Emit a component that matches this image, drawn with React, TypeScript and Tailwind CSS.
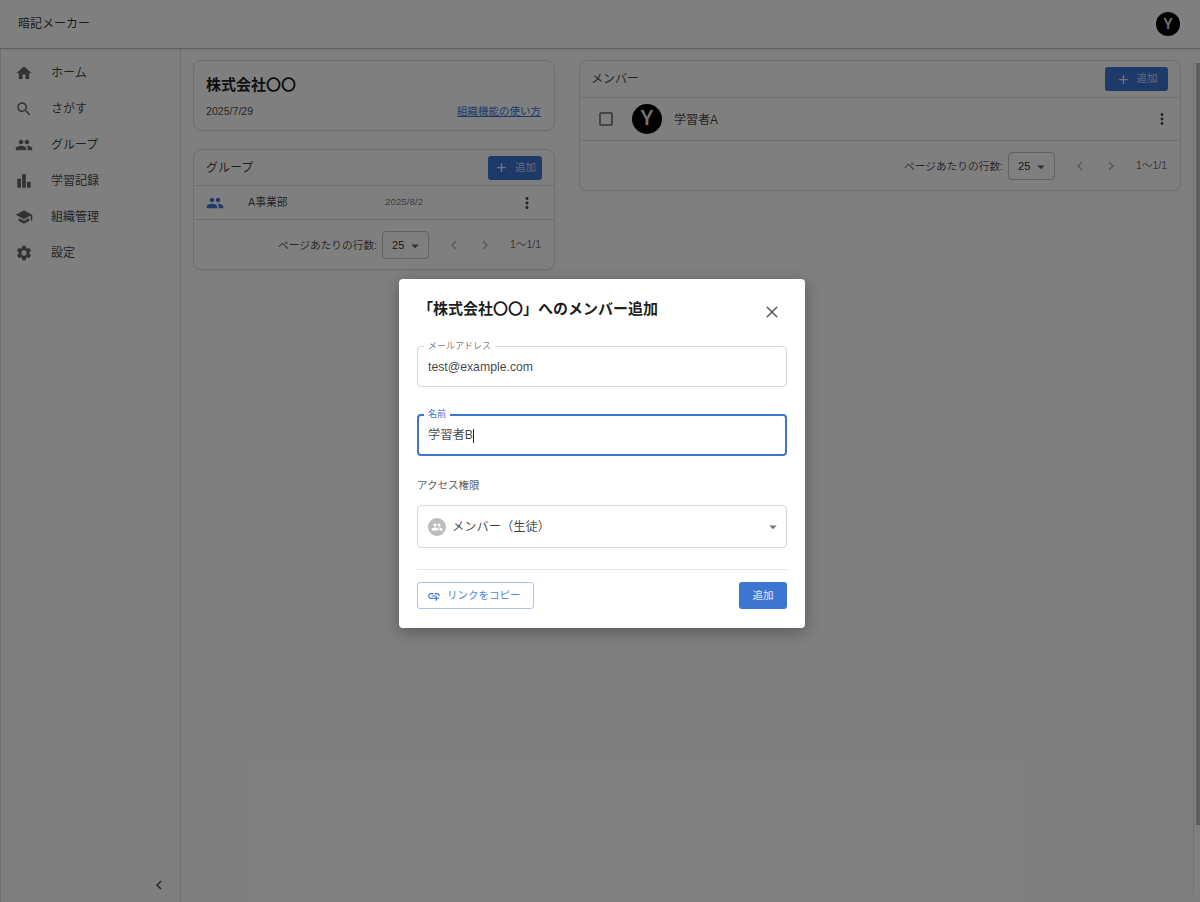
const P = {
  home: "M10 20v-6h4v6h5v-8h3L12 3 2 12h3v8z",
  search: "M15.5 14h-.79l-.28-.27C15.41 12.59 16 11.11 16 9.5 16 5.91 13.09 3 9.5 3S3 5.91 3 9.5 5.91 16 9.5 16c1.61 0 3.09-.59 4.23-1.57l.27.28v.79l5 4.99L20.49 19l-4.99-5zm-6 0C7.01 14 5 11.99 5 9.5S7.01 5 9.5 5 14 7.01 14 9.5 11.99 14 9.5 14z",
  people: "M16 11c1.66 0 2.99-1.34 2.99-3S17.66 5 16 5c-1.66 0-3 1.34-3 3s1.34 3 3 3zm-8 0c1.66 0 2.99-1.34 2.99-3S9.66 5 8 5C6.34 5 5 6.34 5 8s1.34 3 3 3zm0 2c-2.33 0-7 1.17-7 3.5V19h14v-2.5c0-2.33-4.67-3.5-7-3.5zm8 0c-.29 0-.62.02-.97.05 1.16.84 1.97 1.97 1.97 3.45V19h6v-2.5c0-2.33-4.67-3.5-7-3.5z",
  bar: "M3 9h5v12H3zm13 4h5v8h-5zM9.5 3h5v18h-5z",
  school: "M5 13.18v4L12 21l7-3.82v-4L12 17l-7-3.82zM12 3 1 9l11 6 9-4.91V17h2V9L12 3z",
  settings: "M19.14 12.94c.04-.3.06-.61.06-.94 0-.32-.02-.64-.07-.94l2.03-1.58c.18-.14.23-.41.12-.61l-1.92-3.32c-.12-.22-.37-.29-.59-.22l-2.39.96c-.5-.38-1.03-.7-1.62-.94l-.36-2.54c-.04-.24-.24-.41-.48-.41h-3.84c-.24 0-.43.17-.47.41l-.36 2.54c-.59.24-1.13.57-1.62.94l-2.39-.96c-.22-.08-.47 0-.59.22L2.74 8.87c-.12.21-.08.47.12.61l2.03 1.58c-.05.3-.09.63-.09.94s.02.64.07.94l-2.03 1.58c-.18.14-.23.41-.12.61l1.92 3.32c.12.22.37.29.59.22l2.39-.96c.5.38 1.03.7 1.62.94l.36 2.54c.05.24.24.41.48.41h3.84c.24 0 .44-.17.47-.41l.36-2.54c.59-.24 1.13-.56 1.62-.94l2.39.96c.22.08.47 0 .59-.22l1.92-3.32c.12-.22.07-.47-.12-.61l-2.01-1.58zM12 15.6c-1.98 0-3.6-1.62-3.6-3.6s1.62-3.6 3.6-3.6 3.6 1.62 3.6 3.6-1.62 3.6-3.6 3.6z",
  more: "M12 8c1.1 0 2-.9 2-2s-.9-2-2-2-2 .9-2 2 .9 2 2 2zm0 2c-1.1 0-2 .9-2 2s.9 2 2 2 2-.9 2-2-.9-2-2-2zm0 6c-1.1 0-2 .9-2 2s.9 2 2 2 2-.9 2-2-.9-2-2-2z",
  drop: "M7 10l5 5 5-5z",
  close: "M19 6.41 17.59 5 12 10.59 6.41 5 5 6.41 10.59 12 5 17.59 6.41 19 12 13.41 17.59 19 19 17.59 13.41 12z",
  addlink: "M8 11h8v2H8zm12.1 1H22c0-2.76-2.24-5-5-5h-4v1.9h4c1.71 0 3.1 1.39 3.1 3.1zM3.9 12c0-1.71 1.39-3.1 3.1-3.1h4V7H7c-2.76 0-5 2.24-5 5s2.24 5 5 5h4v-1.9H7c-1.71 0-3.1-1.39-3.1-3.1zM17 12h-2v3h-3v2h3v3h2v-3h3v-2h-3z",
  add: "M19 13h-6v6h-2v-6H5v-2h6V5h2v6h6v2z",
  prev: "M15.41 7.41 14 6l-6 6 6 6 1.41-1.41L10.83 12z",
  next: "M10 6 8.59 7.41 13.17 12l-4.58 4.58L10 18l6-6z",
  box: "M19 5v14H5V5h14m0-2H5c-1.1 0-2 .9-2 2v14c0 1.1.9 2 2 2h14c1.1 0 2-.9 2-2V5c0-1.1-.9-2-2-2z",
};

function Icon({ d, className }: { d: string; className: string }) {
  return (
    <svg viewBox="0 0 24 24" fill="currentColor" className={className}>
      <path d={d} />
    </svg>
  );
}

const nav = [
  { icon: P.home, label: "ホーム" },
  { icon: P.search, label: "さがす" },
  { icon: P.people, label: "グループ" },
  { icon: P.bar, label: "学習記録" },
  { icon: P.school, label: "組織管理" },
  { icon: P.settings, label: "設定" },
];

function AddButton({ className }: { className: string }) {
  return (
    <button className={`flex h-6 items-center justify-center gap-[6px] rounded-[3px] bg-[#3d75d3] text-[10.5px] text-white/70 ${className}`}>
      <Icon d={P.add} className="h-[15px] w-[15px] text-white/85" />
      追加
    </button>
  );
}

function Pagination({ h }: { h: string }) {
  return (
    <div className={`flex items-center justify-end pr-[13px] pt-[1px] ${h}`}>
      <span className="text-[10.7px] text-black/70">ページあたりの行数:</span>
      <div className="ml-[5px] flex h-7 w-[47px] items-center justify-between rounded-[4px] border border-[#c4c4c4] pl-[9px] pr-[4px] pt-[1px] text-[11px] text-black/85">
        25
        <Icon d={P.drop} className="h-[18px] w-[18px] text-black/60" />
      </div>
      <Icon d={P.prev} className="ml-4 h-[18px] w-[18px] text-black/30" />
      <Icon d={P.next} className="ml-[13px] h-[18px] w-[18px] text-black/30" />
      <span className="ml-4 text-[10.5px] text-black/60">1〜1/1</span>
    </div>
  );
}

function Avatar({ className }: { className: string }) {
  return (
    <div className={`flex shrink-0 items-center justify-center rounded-full bg-black font-medium text-white/90 [font-family:Roboto,sans-serif] ${className}`}>
      Y
    </div>
  );
}

export default function App() {
  return (
    <div className="relative flex h-[902px] w-[1200px] flex-col overflow-hidden bg-white text-black/85 [font-family:'Liberation_Sans','Noto_Sans_CJK_JP',sans-serif]">
      <header className="flex h-[49px] shrink-0 items-center justify-between border-b border-[#c0c0c0] bg-white pl-[18px] pr-5 shadow-[0_1px_2px_rgba(0,0,0,0.1)]">
        <span className="text-xs text-black/80">暗記メーカー</span>
        <Avatar className="h-6 w-6 text-[15px]" />
      </header>

      <div className="flex min-h-0 flex-1">
        <aside className="flex w-[181px] shrink-0 flex-col justify-between border-x border-[#e0e0e0] border-l-[#dcdcdc] pb-2 pt-[6px]">
          <nav className="flex flex-col">
            {nav.map((n) => (
              <div key={n.label} className="flex h-9 items-center pl-[14px]">
                <Icon d={n.icon} className="h-[18px] w-[18px] text-black/60" />
                <span className="ml-[18px] text-xs text-black/75">{n.label}</span>
              </div>
            ))}
          </nav>
          <div className="flex justify-end pr-[12px]">
            <Icon d={P.prev} className="h-[18px] w-[18px] text-black/70" />
          </div>
        </aside>

        <main className="flex flex-1 items-start gap-6 pl-3 pr-[19px] pt-[11px]">
          <div className="flex w-[362px] shrink-0 flex-col gap-[18px]">
            <section className="h-[71px] rounded-lg border border-[#e0e0e0] px-3 pt-[14px] shadow-[0_1px_1px_rgba(0,0,0,0.06)]">
              <h2 className="text-[15px] font-bold leading-[20px] text-black/90">株式会社〇〇</h2>
              <div className="mt-[9px] flex items-center justify-between pr-[1px]">
                <span className="text-[10.6px] text-black/75">2025/7/29</span>
                <a className="text-[10.5px] text-[#3d75d3] underline">組織機能の使い方</a>
              </div>
            </section>

            <section className="rounded-lg border border-[#e0e0e0] shadow-[0_1px_1px_rgba(0,0,0,0.06)]">
              <div className="flex h-[36px] items-center justify-between border-b border-[#e0e0e0] pl-3 pr-3">
                <span className="text-xs text-black/75">グループ</span>
                <AddButton className="w-[54px]" />
              </div>
              <div className="flex h-[34px] items-center border-b border-[#e0e0e0] pl-3">
                <Icon d={P.people} className="h-[18px] w-[18px] text-[#3d75d3]" />
                <span className="ml-6 w-[137px] text-[10.8px] text-black/75">A事業部</span>
                <span className="text-[9.8px] text-black/55">2025/8/2</span>
                <Icon d={P.more} className="ml-[95px] h-[18px] w-[18px] text-black/70" />
              </div>
              <Pagination h="h-[49px]" />
            </section>
          </div>

          <section className="flex-1 rounded-lg border border-[#e0e0e0] shadow-[0_1px_1px_rgba(0,0,0,0.06)]">
            <div className="flex h-[37px] items-center justify-between border-b border-[#e0e0e0] pl-[11px] pr-3">
              <span className="text-xs text-black/75">メンバー</span>
              <AddButton className="w-[63px]" />
            </div>
            <div className="flex h-[43px] items-center border-b border-[#e0e0e0] pl-[17px] pr-[9px]">
              <Icon d={P.box} className="h-[18px] w-[18px] text-black/60" />
              <Avatar className="ml-[17px] h-[30px] w-[30px] text-[21px]" />
              <span className="ml-3 flex-1 pt-[2px] text-xs text-black/75">学習者A</span>
              <Icon d={P.more} className="h-[18px] w-[18px] text-black/70" />
            </div>
            <Pagination h="h-[49px]" />
          </section>
        </main>
      </div>

      <div className="absolute bottom-[8px] right-[6px] top-[62px] w-px bg-[#e4e4e4]" />
      <div className="absolute bottom-[77px] right-0 top-[63px] w-1 bg-[#bdbdbd]" />

      <div className="absolute inset-0 flex items-center justify-center bg-black/50 pl-[4px] pt-[5px]">
        <div className="flex h-[349px] w-[406px] flex-col rounded-[4px] bg-white px-[18px] shadow-[0_4px_16px_rgba(0,0,0,0.3)]">
          <div className="flex items-start justify-between pt-[20px]">
            <h3 className="pl-[1px] text-[15px] font-bold leading-5 text-black/90">「株式会社〇〇」へのメンバー追加</h3>
            <Icon d={P.close} className="mr-[5px] mt-[3px] h-[20px] w-[20px] text-black/60" />
          </div>

          <div className="relative mt-[24px] flex h-[41px] items-center rounded-[4px] border border-[#d8d8d8] px-[10px] pt-[1px] text-[12.25px] text-black/75">
            <span className="absolute -top-[6px] left-[6px] bg-white px-[4px] text-[9px] leading-[10px] text-black/55">メールアドレス</span>
            test@example.com
          </div>

          <div className="relative mt-[27px] flex h-[42px] items-center rounded-[4px] border-2 border-[#3d75d3] px-[9px] pt-[1px] text-[12.25px] text-black/75">
            <span className="absolute -top-[7px] left-[5px] bg-white px-[4px] text-[9px] leading-[10px] text-[#3d75d3]">名前</span>
            学習者B
            <span className="h-[14px] w-px bg-black/85" />
          </div>

          <label className="mt-[21px] text-[10.5px] leading-4 text-black/70">アクセス権限</label>

          <div className="mt-3 flex h-[43px] items-center rounded-[4px] border border-[#d8d8d8] pl-[10px] pr-[4px] pt-[1px] text-[12.25px] text-black/75">
            <div className="flex h-[18px] w-[18px] items-center justify-center rounded-full bg-[#bdbdbd]">
              <Icon d={P.people} className="h-3 w-3 text-white" />
            </div>
            <span className="ml-[6px] flex-1">メンバー（生徒）</span>
            <Icon d={P.drop} className="h-[18px] w-[18px] text-black/55" />
          </div>

          <div className="mt-[21px] border-t border-[#e6e6e6]" />

          <div className="mt-3 flex items-center justify-between">
            <button className="flex h-[27px] w-[117px] items-center rounded-[3px] border border-[#a9c6f0] pl-[9px] text-[10.5px] text-[#5288dc]">
              <Icon d={P.addlink} className="h-[14px] w-[14px] text-[#3d75d3]" />
              <span className="ml-[6px]">リンクをコピー</span>
            </button>
            <button className="flex h-[27px] w-[48px] items-center justify-center rounded-[3px] bg-[#3d75d3] text-[10.5px] text-white/85">追加</button>
          </div>
        </div>
      </div>
    </div>
  );
}
